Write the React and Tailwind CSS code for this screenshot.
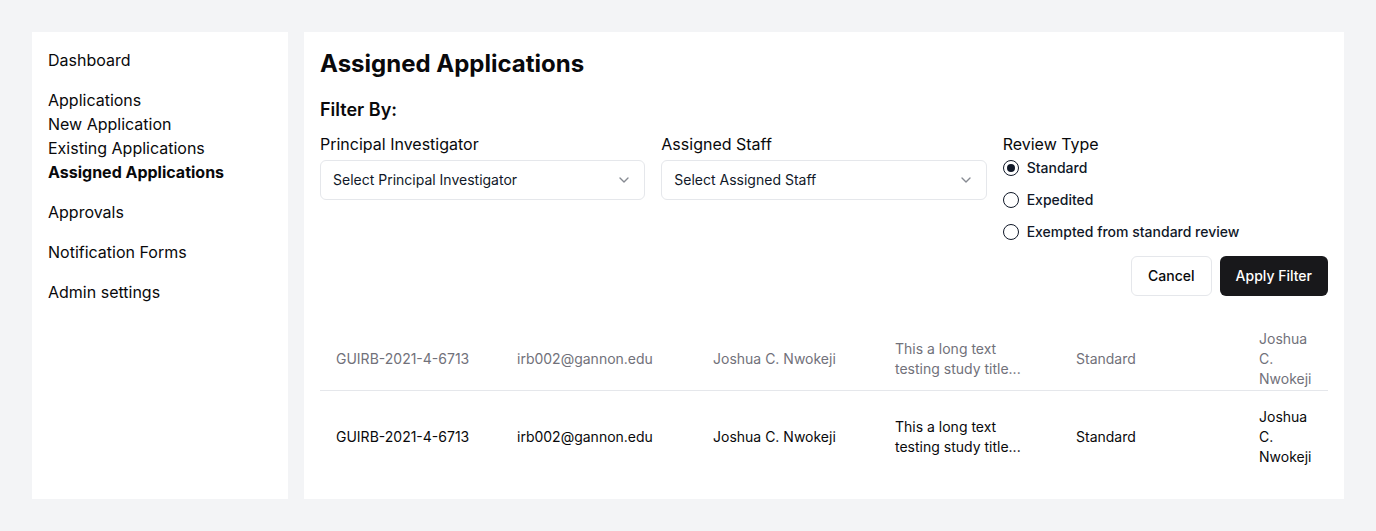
import React from 'react';
import { ChevronDown } from 'lucide-react';

const rows = [
  { id: 'GUIRB-2021-4-6713', email: 'irb002@gannon.edu', pi: 'Joshua C. Nwokeji', title: 'This a long text testing study title...', type: 'Standard', staff: 'Joshua C. Nwokeji' },
];

function Select({ placeholder }) {
  return (
    <button className="flex h-10 w-full items-center justify-between rounded-md border border-gray-200 bg-white px-3 text-sm text-gray-900">
      <span>{placeholder}</span>
      <ChevronDown className="h-4 w-4 opacity-50" />
    </button>
  );
}

function Radio({ label, checked }) {
  return (
    <label className="flex items-center gap-2 text-sm font-medium leading-5 text-gray-900">
      <span className="flex h-4 w-4 items-center justify-center rounded-full border border-gray-900">
        {checked && <span className="h-2 w-2 rounded-full bg-gray-900" />}
      </span>
      {label}
    </label>
  );
}

export default function App() {
  const r = rows[0];
  return (
    <div className="flex min-h-[531px] gap-4 bg-[#f3f4f6] p-8 text-[#09090b]" style={{ fontFamily: 'Inter, "Noto Sans", sans-serif' }}>
      {/* sidebar */}
      <aside className="flex w-[256px] shrink-0 flex-col gap-4 bg-white p-4 text-base leading-6">
        <a>Dashboard</a>
        <div className="flex flex-col">
          <a>Applications</a>
          <a>New Application</a>
          <a>Existing Applications</a>
          <a className="font-bold">Assigned Applications</a>
        </div>
        <a>Approvals</a>
        <a>Notification Forms</a>
        <a>Admin settings</a>
      </aside>

      {/* main */}
      <main className="flex-1 bg-white p-4">
        <h1 className="text-2xl font-bold leading-8">Assigned Applications</h1>
        <h2 className="mt-4 text-lg font-semibold leading-7">Filter By:</h2>

        <div className="mt-2 grid grid-cols-3 gap-4">
          <div className="flex flex-col gap-1">
            <span className="leading-6">Principal Investigator</span>
            <Select placeholder="Select Principal Investigator" />
          </div>
          <div className="flex flex-col gap-1">
            <span className="leading-6">Assigned Staff</span>
            <Select placeholder="Select Assigned Staff" />
          </div>
          <div className="flex flex-col gap-0.5">
            <span className="leading-6">Review Type</span>
            <div className="flex flex-col gap-3">
              <Radio label="Standard" checked />
              <Radio label="Expedited" />
              <Radio label="Exempted from standard review" />
            </div>
          </div>
        </div>

        <div className="mt-[14px] flex justify-end gap-2">
          <button className="h-10 rounded-md border border-gray-200 bg-white px-4 text-sm font-medium">Cancel</button>
          <button className="h-10 rounded-md bg-[#18181b] px-4 text-sm font-medium text-white">Apply Filter</button>
        </div>

        <table className="mt-[33px] w-full table-fixed text-left text-sm leading-5">
          <thead>
            <tr className="border-b border-gray-200 text-[#71717a]">
              <th className="w-[181px] px-4 pb-px font-normal">{r.id}</th>
              <th className="w-[196px] px-4 pb-px font-normal">{r.email}</th>
              <th className="w-[182px] px-4 pb-px font-normal">{r.pi}</th>
              <th className="w-[181px] px-4 pb-px font-normal">{r.title}</th>
              <th className="w-[183px] px-4 pb-px font-normal">{r.type}</th>
              <th className="w-[85px] px-4 pb-px font-normal">{r.staff}</th>
            </tr>
          </thead>
          <tbody>
            {rows.map((row, i) => (
              <tr key={i}>
                <td className="p-4">{row.id}</td>
                <td className="p-4">{row.email}</td>
                <td className="p-4">{row.pi}</td>
                <td className="p-4">{row.title}</td>
                <td className="p-4">{row.type}</td>
                <td className="p-4">{row.staff}</td>
              </tr>
            ))}
          </tbody>
        </table>
      </main>
    </div>
  );
}
